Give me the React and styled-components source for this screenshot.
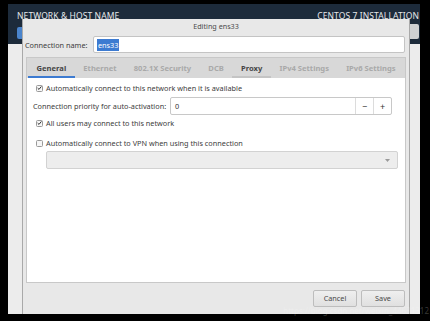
import styled, { createGlobalStyle } from "styled-components";

const Global = createGlobalStyle`
  html, body {
    margin: 0;
    padding: 0;
    background: #000;
  }
  body {
    width: 430px;
    height: 321px;
    overflow: hidden;
    font-family: "Noto Sans", "DejaVu Sans", sans-serif;
  }
`;

const Frame = styled.div`
  position: relative;
  width: 430px;
  height: 321px;
  background: #000;
  padding: 4px 10px 7px 8px;
  box-sizing: border-box;
`;

const Screen = styled.div`
  position: relative;
  height: 100%;
  display: flex;
  flex-direction: column;
  background: #ececec;
`;

const Header = styled.div`
  height: 40px;
  background: #1d2b3b;
  padding: 6px 1px 0 9px;
  box-sizing: border-box;
  display: flex;
  flex-direction: column;
  gap: 3px;
`;

const HeaderRow = styled.div`
  display: flex;
  justify-content: space-between;
  align-items: center;
`;

const HeaderTitle = styled.span`
  color: #e6e8ea;
  font-size: 8.5px;
  letter-spacing: 0.1px;
`;

const DoneButton = styled.div`
  width: 40px;
  height: 12px;
  margin-top: 3px;
  border-radius: 2px;
  background: #4a84cc;
`;

const KeyboardBox = styled.div`
  width: 30px;
  height: 15px;
  background: #cfd1d3;
  border-radius: 2px;
`;

const Dialog = styled.div`
  position: absolute;
  left: 14px;
  top: 15px;
  width: 388px;
  bottom: 0;
  background: #e8e8e8;
  border-left: 1px solid #a9a9a9;
  border-right: 1px solid #a9a9a9;
  box-sizing: border-box;
  display: flex;
  flex-direction: column;
`;

const DialogTitle = styled.div`
  height: 16px;
  line-height: 14px;
  text-align: center;
  font-size: 7.2px;
  color: #4a4a4a;
`;

const NameRow = styled.div`
  display: flex;
  align-items: center;
  padding: 1px 4px 0 2px;
`;

const Label = styled.span`
  font-size: 7.3px;
  color: #3c3c3c;
  white-space: nowrap;
  width: ${(p) => p.$width || "auto"};
  flex-shrink: 0;
`;

const TextField = styled.div`
  flex: 1;
  height: 17px;
  box-sizing: border-box;
  background: #fff;
  border: 1px solid #c4c4c4;
  border-radius: 2px;
  display: flex;
  align-items: center;
  padding-left: 3px;
`;

const Selected = styled.span`
  font-size: 7.3px;
  background: #3d7bd1;
  color: #fff;
  padding: 1px 1px;
`;

const Notebook = styled.div`
  flex: 1;
  margin: 4px 3px 0 3px;
  display: flex;
  flex-direction: column;
  border: 1px solid #c8c8c8;
`;

const Tabs = styled.div`
  height: 20px;
  background: #d8d8d8;
  display: flex;
  padding-left: 1px;
`;

const Tab = styled.div`
  padding: 2px 8.6px 0;
  display: flex;
  align-items: center;
  font-size: 7.6px;
  font-weight: 700;
  color: ${(p) => (p.$dim ? "#a9a9a9" : "#454545")};
  border-bottom: 2px solid
    ${(p) => (p.$active ? "#3d7bd1" : p.$hover ? "#c4c4c4" : "transparent")};
  box-sizing: border-box;
`;

const Content = styled.div`
  flex: 1;
  background: #fff;
  display: flex;
  flex-direction: column;
  padding: 5px 7px 0 5px;
`;

const CheckRow = styled.div`
  display: flex;
  align-items: center;
  gap: 3px;
  height: 10px;
  margin-top: ${(p) => p.$mt || 0}px;
  padding-left: 4px;
`;

const Box = styled.span`
  width: 7px;
  height: 7px;
  box-sizing: border-box;
  border: 1px solid #9a9a9a;
  border-radius: 1.5px;
  background: #f6f6f6;
  display: flex;
  align-items: center;
  justify-content: center;
`;

const PriorityRow = styled.div`
  display: flex;
  align-items: center;
  margin-top: 4px;
  padding-left: 1px;
  padding-right: 6px;
`;

const SpinField = styled.div`
  flex: 1;
  height: 18px;
  box-sizing: border-box;
  border: 1px solid #c8c8c8;
  border-radius: 2px;
  display: flex;
  align-items: stretch;
`;

const SpinValue = styled.div`
  flex: 1;
  display: flex;
  align-items: center;
  padding-left: 4px;
  font-size: 7.3px;
  color: #333;
`;

const SpinButton = styled.div`
  width: 17px;
  border-left: 1px solid #dcdcdc;
  display: flex;
  align-items: center;
  justify-content: center;
  font-size: 9px;
  color: #333;
`;

const Combo = styled.div`
  height: 18px;
  margin: 3px 0 0 14px;
  box-sizing: border-box;
  border: 1px solid #d2d2d2;
  border-radius: 2px;
  background: #ededed;
  display: flex;
  align-items: center;
  justify-content: flex-end;
  padding-right: 7px;
`;

const Footer = styled.div`
  height: 31px;
  display: flex;
  justify-content: flex-end;
  align-items: center;
  gap: 4px;
  padding: 0 4px 1px 0;
  box-sizing: border-box;
`;

const Button = styled.div`
  width: 44px;
  height: 17px;
  box-sizing: border-box;
  border: 1px solid #bdbdbd;
  border-radius: 2px;
  background: linear-gradient(#efefef, #e0e0e0);
  display: flex;
  align-items: center;
  justify-content: center;
  font-size: 7.3px;
  color: #4a4a4a;
`;

const Watermark = styled.div`
  position: absolute;
  right: 1px;
  bottom: 5px;
  font-size: 8px;
  color: rgba(255, 255, 255, 0.22);
  white-space: nowrap;
`;

const Check = () => (
  <svg width="6" height="6" viewBox="0 0 6 6">
    <path d="M0.8 3.1 L2.4 4.7 L5.3 1.1" fill="none" stroke="#333" strokeWidth="1.2" />
  </svg>
);

const Arrow = () => (
  <svg width="5" height="3" viewBox="0 0 5 3">
    <path d="M0 0 L5 0 L2.5 3 Z" fill="#9a9a9a" />
  </svg>
);

const tabs = [
  { name: "General", active: true },
  { name: "Ethernet", dim: true },
  { name: "802.1X Security", dim: true },
  { name: "DCB", dim: true },
  { name: "Proxy", hover: true },
  { name: "IPv4 Settings", dim: true },
  { name: "IPv6 Settings", dim: true },
];

export default function App() {
  return (
    <>
      <Global />
      <Frame>
        <Screen>
          <Header>
            <HeaderRow>
              <HeaderTitle>NETWORK &amp; HOST NAME</HeaderTitle>
              <HeaderTitle>CENTOS 7 INSTALLATION</HeaderTitle>
            </HeaderRow>
            <HeaderRow>
              <DoneButton />
              <KeyboardBox />
            </HeaderRow>
          </Header>

          <Dialog>
            <DialogTitle>Editing ens33</DialogTitle>
            <NameRow>
              <Label $width="68px">Connection name:</Label>
              <TextField>
                <Selected>ens33</Selected>
              </TextField>
            </NameRow>

            <Notebook>
              <Tabs>
                {tabs.map((t) => (
                  <Tab key={t.name} $active={t.active} $dim={t.dim} $hover={t.hover}>
                    {t.name}
                  </Tab>
                ))}
              </Tabs>
              <Content>
                <CheckRow>
                  <Box><Check /></Box>
                  <Label>Automatically connect to this network when it is available</Label>
                </CheckRow>
                <PriorityRow>
                  <Label $width="137px">Connection priority for auto-activation:</Label>
                  <SpinField>
                    <SpinValue>0</SpinValue>
                    <SpinButton>−</SpinButton>
                    <SpinButton>+</SpinButton>
                  </SpinField>
                </PriorityRow>
                <CheckRow $mt={3}>
                  <Box><Check /></Box>
                  <Label>All users may connect to this network</Label>
                </CheckRow>
                <CheckRow $mt={10}>
                  <Box />
                  <Label>Automatically connect to VPN when using this connection</Label>
                </CheckRow>
                <Combo>
                  <Arrow />
                </Combo>
              </Content>
            </Notebook>

            <Footer>
              <Button>Cancel</Button>
              <Button>Save</Button>
            </Footer>
          </Dialog>
        </Screen>
        <Watermark>https://blog.csdn.net/weixin_44631312</Watermark>
      </Frame>
    </>
  );
}
